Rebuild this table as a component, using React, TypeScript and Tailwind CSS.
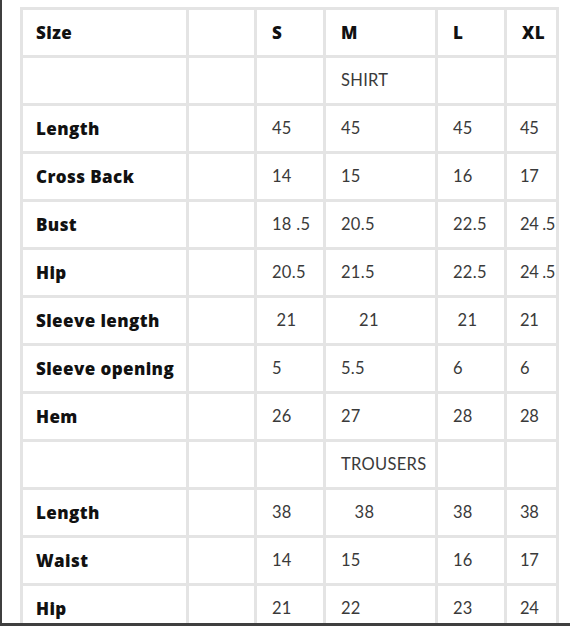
const header = ["Size", "", "S", "M", "L", "XL"];

type Row = { label: string; values: string[]; section?: string };

const rows: Row[] = [
  { label: "", values: ["", "", "", ""], section: "SHIRT" },
  { label: "Length", values: ["45", "45", "45", "45"] },
  { label: "Cross Back", values: ["14", "15", "16", "17"] },
  { label: "Bust", values: ["18 .5", "20.5", "22.5", "24 .5"] },
  { label: "Hip", values: ["20.5", "21.5", "22.5", "24 .5"] },
  { label: "Sleeve length", values: [" 21", "    21", " 21", "21"] },
  { label: "Sleeve opening", values: ["5", "5.5", "6", "6"] },
  { label: "Hem", values: ["26", "27", "28", "28"] },
  { label: "", values: ["", "", "", ""], section: "TROUSERS" },
  { label: "Length", values: ["38", "   38", "38", "38"] },
  { label: "Waist", values: ["14", "15", "16", "17"] },
  { label: "Hip", values: ["21", "22", "23", "24"] },
];

const bold = "font-['Open_Sans',sans-serif] font-extrabold text-[17px] tracking-[0.4px] text-[#111]";
const light = "font-['Lato',sans-serif] text-[16.5px] text-[#3a3a3a] whitespace-pre";

export default function App() {
  return (
    <div className="w-[570px] h-[626px] bg-white border-l-2 border-b-[3px] border-[#3f3f3f] overflow-hidden">
      <div className="ml-[18px] mt-[7px] w-[539px] grid grid-cols-[163px_65px_66px_109px_66px_49px] gap-[3px] p-[3px] bg-[#e4e4e4]">
        {header.map((h, i) => (
          <div key={i} className={`h-[45px] bg-white flex items-center ${i === 0 ? "pl-[13px]" : "pl-[15px]"} ${bold}`}>
            {h}
          </div>
        ))}
        {rows.map((r, ri) => (
          <>
            <div key={`l${ri}`} className={`h-[45px] bg-white flex items-center pl-[13px] ${bold}`}>
              {r.label}
            </div>
            <div key={`e${ri}`} className="h-[45px] bg-white" />
            {r.values.map((v, vi) => (
              <div key={`v${ri}-${vi}`} className={`h-[45px] bg-white flex items-center ${vi === 3 ? "pl-[13px] tracking-[-0.4px]" : "pl-[15px] tracking-[0.3px]"} ${light}`}>
                {vi === 1 && r.section ? r.section : v}
              </div>
            ))}
          </>
        ))}
      </div>
    </div>
  );
}
